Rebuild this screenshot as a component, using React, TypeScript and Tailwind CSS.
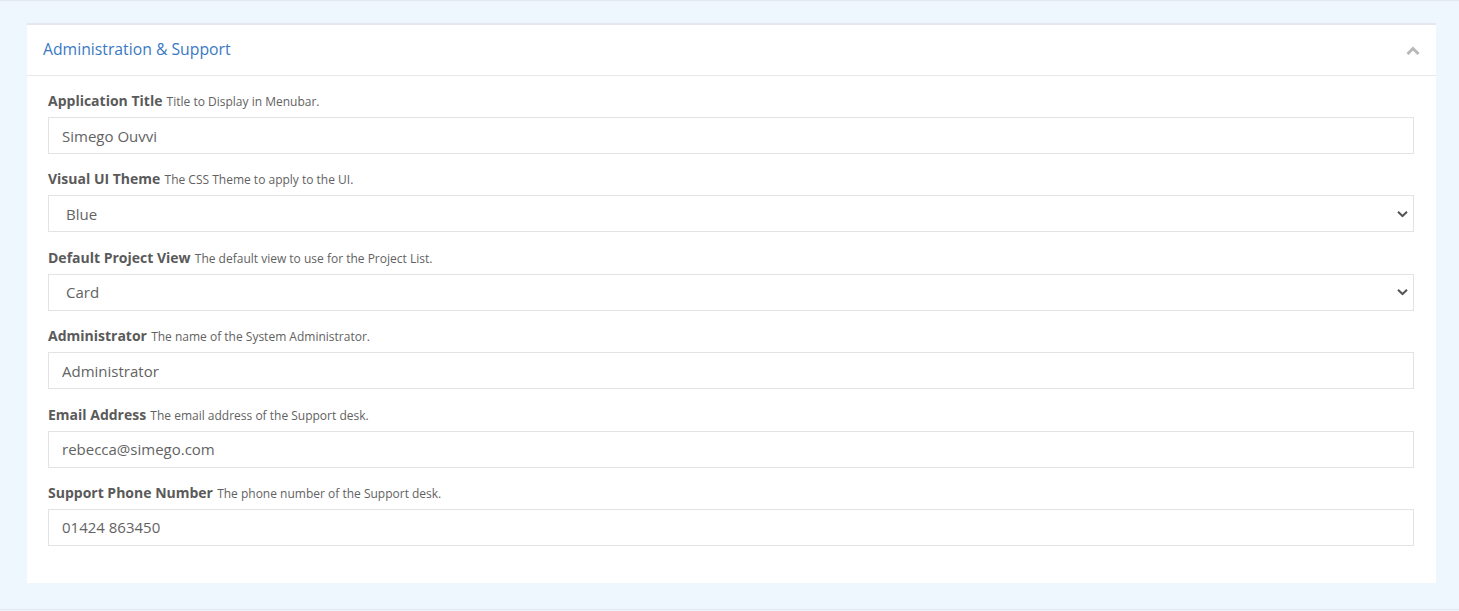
import { useState } from 'react';

type Field = {
  label: string;
  help: string;
  value: string;
  options?: string[];
};

const fields: Field[] = [
  { label: 'Application Title', help: 'Title to Display in Menubar.', value: 'Simego Ouvvi' },
  { label: 'Visual UI Theme', help: 'The CSS Theme to apply to the UI.', value: 'Blue', options: ['Blue', 'Green', 'Dark'] },
  { label: 'Default Project View', help: 'The default view to use for the Project List.', value: 'Card', options: ['Card', 'List'] },
  { label: 'Administrator', help: 'The name of the System Administrator.', value: 'Administrator' },
  { label: 'Email Address', help: 'The email address of the Support desk.', value: 'rebecca@simego.com' },
  { label: 'Support Phone Number', help: 'The phone number of the Support desk.', value: '01424 863450' },
];

function ChevronUp() {
  return (
    <svg width="14" height="10" viewBox="0 0 14 10" fill="none">
      <path d="M1.5 8L7 2.5L12.5 8" stroke="#b8b8b8" strokeWidth="3" strokeLinecap="butt" />
    </svg>
  );
}

function ChevronDown() {
  return (
    <svg width="11" height="7" viewBox="0 0 11 7" fill="none">
      <path d="M1 1.2L5.5 5.5L10 1.2" stroke="#555" strokeWidth="2" />
    </svg>
  );
}

function FieldRow({ field }: { field: Field }) {
  const [value, setValue] = useState(field.value);
  return (
    <div className="mb-[14.4px]">
      <div className="mb-[6px] h-[21px] leading-[21px] text-[#5a5a5a]">
        <span className="text-[14px] font-bold">{field.label}</span>{' '}
        <span className="text-[12px] text-[#626262]">{field.help}</span>
      </div>
      {field.options ? (
        <div className="relative">
          <select
            value={value}
            onChange={(e) => setValue(e.target.value)}
            className="block h-[37px] w-full appearance-none border border-[#e3e3e3] bg-white pl-[17px] text-[15px] text-[#636363] outline-none"
          >
            {field.options.map((o) => (
              <option key={o}>{o}</option>
            ))}
          </select>
          <div className="pointer-events-none absolute top-1/2 right-[6px] -translate-y-1/2">
            <ChevronDown />
          </div>
        </div>
      ) : (
        <input
          value={value}
          onChange={(e) => setValue(e.target.value)}
          className="block h-[37px] w-full border border-[#e3e3e3] bg-white px-[13px] text-[15px] text-[#636363] outline-none"
        />
      )}
    </div>
  );
}

export default function App() {
  return (
    <div
      className="min-h-screen border-t border-[#e3e8ee] bg-[#eef6fe] pt-[22px]"
      style={{ fontFamily: '"Open Sans", "Noto Sans", sans-serif' }}
    >
      <div className="ml-[27px] mr-[23px] border-t-2 border-[#e4e8ed] bg-white">
        <div className="flex h-[51px] items-center justify-between border-b border-[#e8e8e8] pl-4 pr-[16px]">
          <span className="text-[15.75px] text-[#3a79c4]">Administration &amp; Support</span>
          <div className="mt-[2px]">
            <ChevronUp />
          </div>
        </div>
        <div className="pl-[21px] pr-[22px] pt-[14px] pb-[23px]">
          {fields.map((f) => (
            <FieldRow key={f.label} field={f} />
          ))}
        </div>
      </div>
      <div className="mt-[26px] border-t border-[#e3e8ee]" />
    </div>
  );
}
